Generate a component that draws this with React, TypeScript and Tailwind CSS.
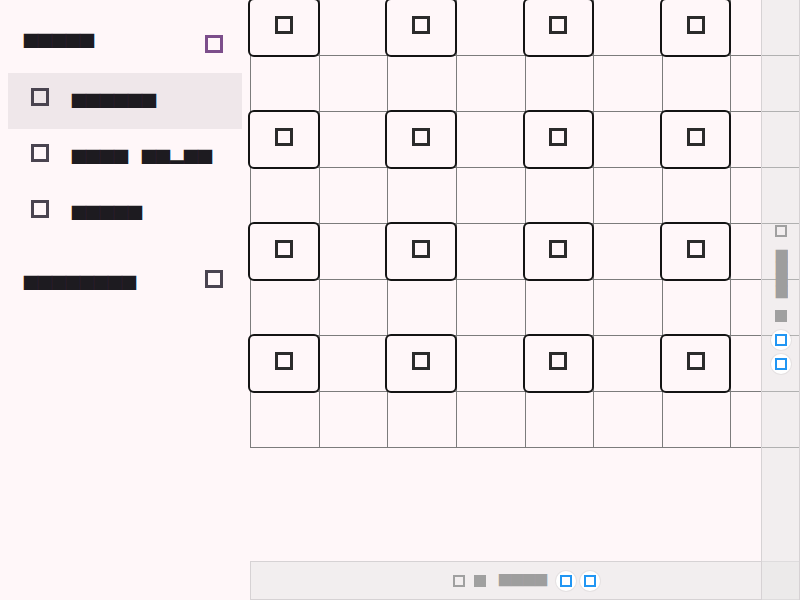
import React from "react"

// text blocks, drawn with DejaVu Sans Mono block glyphs squashed to a square cell
const Big: React.FC<{ text: string }> = ({ text }) => (
  <span className="flex h-[14px] items-center">
    <span className="block scale-y-[0.5174] whitespace-pre font-['DejaVu_Sans_Mono',monospace] text-[23.25px] leading-none text-[#1d1b20]">
      {text}
    </span>
  </span>
)

const Small: React.FC<{ text: string; vertical?: boolean }> = ({ text, vertical }) =>
  vertical ? (
    <span className="flex w-[12px] justify-center">
      <span className="block scale-x-[0.5174] whitespace-pre font-['DejaVu_Sans_Mono',monospace] text-[19.93px] leading-none text-[#9e9e9e] [writing-mode:vertical-rl]">
        {text}
      </span>
    </span>
  ) : (
    <span className="flex h-[12px] items-center">
      <span className="block scale-y-[0.5174] whitespace-pre font-['DejaVu_Sans_Mono',monospace] text-[19.93px] leading-none text-[#9e9e9e]">
        {text}
      </span>
    </span>
  )

const BlueButton = () => (
  <span className="flex h-[20px] w-[20px] items-center justify-center rounded-full bg-white shadow-[0_0_0_1px_rgba(0,0,0,0.05)]">
    <span className="block h-[12px] w-[12px] border-2 border-[#2196f3]" />
  </span>
)

const items = [
  { label: "██████", active: true },
  { label: "████ ██▂██", active: false },
  { label: "█████", active: false },
]

const cells = Array.from({ length: 64 }, (_, i) => i)

export default function App() {
  return (
    <div className="relative flex h-[600px] w-[800px] overflow-hidden bg-[#fff7f9]">
      <aside className="w-[250px] shrink-0 px-2 pt-5">
        <div className="flex h-[48px] items-center justify-between pl-4 pr-[19px]">
          <span className="mb-[6px]">
            <Big text="█████" />
          </span>
          <span className="block h-[18px] w-[18px] border-[3px] border-[#7c4e8b]" />
        </div>

        <ul className="mt-[5px]">
          {items.map((item, index) => (
            <li
              key={index}
              className={
                item.active
                  ? "flex h-[56px] items-center bg-[#efe7ea] pl-[23px]"
                  : "flex h-[56px] items-center pl-[23px]"
              }
            >
              <span className="mb-[8px] block h-[18px] w-[18px] border-[3px] border-[#4a4450]" />
              <span className="ml-[23px]">
                <Big text={item.label} />
              </span>
            </li>
          ))}
        </ul>

        <div className="mt-[14px] flex h-[48px] items-center justify-between pl-4 pr-[19px]">
          <span className="mt-[8px]">
            <Big text="████████" />
          </span>
          <span className="block h-[18px] w-[18px] border-[3px] border-[#4a4450]" />
        </div>
      </aside>

      <main className="relative flex-1">
        <div className="grid w-[550px] grid-cols-8 border-l border-[#7c7c7c]">
          {cells.map((i) => {
            const row = Math.floor(i / 8)
            const col = i % 8
            const card = row % 2 === 0 && col % 2 === 0
            return (
              <div key={i} className="relative h-[56px] border-b border-r border-[#7c7c7c]">
                {card && (
                  <div className="absolute -bottom-[2px] -left-[3px] -right-[1px] -top-[2px] z-10 flex items-center justify-center rounded-[6px] border-2 border-[#141414] bg-[#fff7f9]">
                    <span className="mb-[6px] block h-[18px] w-[18px] border-[3px] border-[#2b2b2b]" />
                  </div>
                )}
              </div>
            )
          })}
        </div>
      </main>

      {/* bottom toolbar */}
      <div className="absolute bottom-0 left-[250px] right-0 z-20 flex h-[39px] items-center justify-center border border-[#d6d2d4] bg-[rgba(229,229,229,0.5)] pl-[3px]">
        <span className="block h-[12px] w-[12px] border-2 border-[#a0a0a0]" />
        <span className="ml-[9px] block h-[12px] w-[12px] bg-[#a0a0a0]" />
        <span className="ml-[13px]">
          <Small text="████" />
        </span>
        <span className="ml-[9px]">
          <BlueButton />
        </span>
        <span className="ml-[4px]">
          <BlueButton />
        </span>
      </div>

      {/* right toolbar */}
      <div className="absolute bottom-0 right-0 top-0 z-30 flex w-[39px] flex-col items-center justify-center border-x border-[#d6d2d4] bg-[rgba(229,229,229,0.5)] pb-[1px]">
        <span className="block h-[12px] w-[12px] border-2 border-[#a0a0a0]" />
        <span className="mt-[13px]">
          <Small text="████" vertical />
        </span>
        <span className="mt-[13px] block h-[12px] w-[12px] bg-[#a0a0a0]" />
        <span className="mt-[8px]">
          <BlueButton />
        </span>
        <span className="mt-[4px]">
          <BlueButton />
        </span>
      </div>
    </div>
  )
}
